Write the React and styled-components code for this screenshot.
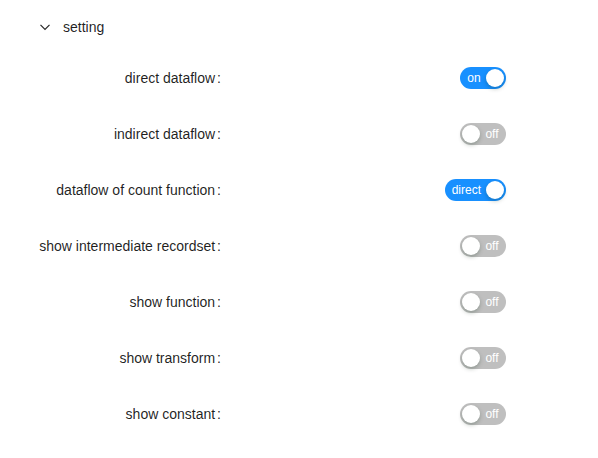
import React, { useState } from "react";
import styled, { createGlobalStyle } from "styled-components";

const Global = createGlobalStyle`
  html, body { margin: 0; padding: 0; background: #fff; }
  body { font-family: "Liberation Sans", Arial, sans-serif; font-size: 14px; color: rgba(0,0,0,0.85); }
`;

const Panel = styled.div`
  width: 598px;
`;

const Header = styled.div`
  display: flex;
  align-items: center;
  height: 54px;
  padding-left: 39px;
  box-sizing: border-box;
  gap: 12px;
  font-size: 14px;
  color: rgba(0,0,0,0.88);
`;

const Body = styled.div`
  padding-top: 8px;
  display: flex;
  flex-direction: column;
  gap: 24px;
`;

const Row = styled.div`
  display: grid;
  grid-template-columns: 225px 281px;
  height: 32px;
  align-items: center;
`;

const Label = styled.label`
  text-align: right;
  white-space: nowrap;
  color: rgba(0,0,0,0.88);
  &::after {
    content: ":";
    margin: 0 4px 0 2px;
  }
`;

const Control = styled.div`
  display: flex;
  justify-content: flex-end;
`;

const SwitchBtn = styled.button`
  position: relative;
  display: inline-flex;
  align-items: center;
  justify-content: center;
  height: 22px;
  min-width: 46px;
  border: 0;
  border-radius: 11px;
  box-sizing: border-box;
  cursor: pointer;
  background: ${p => (p.$on ? "#1890ff" : "#bfbfbf")};
  padding: ${p => (p.$on ? "0 25px 0 7px" : "0 7px 0 25px")};
  font-family: "Liberation Sans", Arial, sans-serif;
`;

const SwitchText = styled.span`
  color: #fff;
  font-size: 12px;
  line-height: 22px;
`;

const Handle = styled.span`
  position: absolute;
  top: 2px;
  ${p => (p.$on ? "right: 2px;" : "left: 2px;")}
  width: 18px;
  height: 18px;
  border-radius: 50%;
  background: #fff;
  box-shadow: 0 2px 4px rgba(0, 35, 11, 0.25);
`;

function Switch({ on, onText, offText, onToggle }) {
  return (
    <SwitchBtn $on={on} onClick={onToggle}>
      <SwitchText>{on ? onText : offText}</SwitchText>
      <Handle $on={on} />
    </SwitchBtn>
  );
}

const initial = [
  { label: "direct dataflow", on: true, onText: "on", offText: "off" },
  { label: "indirect dataflow", on: false, onText: "on", offText: "off" },
  { label: "dataflow of count function", on: true, onText: "direct", offText: "indirect" },
  { label: "show intermediate recordset", on: false, onText: "on", offText: "off" },
  { label: "show function", on: false, onText: "on", offText: "off" },
  { label: "show transform", on: false, onText: "on", offText: "off" },
  { label: "show constant", on: false, onText: "on", offText: "off" },
];

export default function App() {
  const [items, setItems] = useState(initial);
  const toggle = i =>
    setItems(items.map((it, j) => (j === i ? { ...it, on: !it.on } : it)));
  return (
    <Panel>
      <Global />
      <Header>
        <svg width="12" height="12" viewBox="0 0 12 12" fill="none">
          <path d="M1.5 3.8 L6 8.3 L10.5 3.8" stroke="rgba(0,0,0,0.85)" strokeWidth="1.2" />
        </svg>
        <span>setting</span>
      </Header>
      <Body>
        {items.map((it, i) => (
          <Row key={it.label}>
            <Label>{it.label}</Label>
            <Control>
              <Switch on={it.on} onText={it.onText} offText={it.offText} onToggle={() => toggle(i)} />
            </Control>
          </Row>
        ))}
      </Body>
    </Panel>
  );
}
